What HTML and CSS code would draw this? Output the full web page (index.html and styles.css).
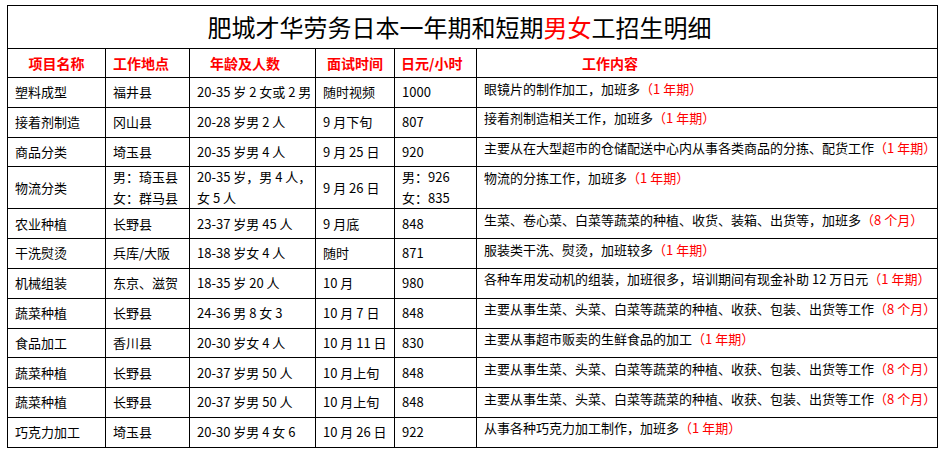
FILE: index.html
```html
<!DOCTYPE html>
<html lang="zh-CN">
<head>
<meta charset="utf-8">
<title>肥城才华劳务日本一年期和短期男女工招生明细</title>
<link rel="stylesheet" href="styles.css">
</head>
<body>
<div class="page">
<table class="sheet">
  <colgroup>
    <col class="c-name">
    <col class="c-place">
    <col class="c-age">
    <col class="c-date">
    <col class="c-pay">
    <col class="c-desc">
  </colgroup>
  <tr class="title-row">
    <th colspan="6" class="title">肥城才华劳务日本一年期和短期<span class="red">男女</span>工招生明细</th>
  </tr>
  <tr class="head-row">
    <th class="h-center">项目名称</th>
    <th class="h-place">工作地点</th>
    <th class="h-age">年龄及人数</th>
    <th class="h-center">面试时间</th>
    <th class="h-pay">日元/小时</th>
    <th class="h-desc">工作内容</th>
  </tr>
  <tr>
    <td>塑料成型</td><td>福井县</td><td>20-35 岁 2 女或 2 男</td><td>随时视频</td><td>1000</td>
    <td class="desc">眼镜片的制作加工，加班多<span class="red">（1 年期）</span></td>
  </tr>
  <tr>
    <td>接着剂制造</td><td>冈山县</td><td>20-28 岁男 2 人</td><td>9 月下旬</td><td>807</td>
    <td class="desc">接着剂制造相关工作，加班多<span class="red">（1 年期）</span></td>
  </tr>
  <tr>
    <td>商品分类</td><td>埼玉县</td><td>20-35 岁男 4 人</td><td>9 月 25 日</td><td>920</td>
    <td class="desc">主要从在大型超市的仓储配送中心内从事各类商品的分拣、配货工作<span class="red">（1 年期）</span></td>
  </tr>
  <tr class="tall-row">
    <td>物流分类</td><td>男：琦玉县<br>女：群马县</td><td>20-35 岁，男 4 人，<br>女 5 人</td><td>9 月 26 日</td><td>男：926<br>女：835</td>
    <td class="desc">物流的分拣工作，加班多<span class="red">（1 年期）</span></td>
  </tr>
  <tr>
    <td>农业种植</td><td>长野县</td><td>23-37 岁男 45 人</td><td>9 月底</td><td>848</td>
    <td class="desc">生菜、卷心菜、白菜等蔬菜的种植、收货、装箱、出货等，加班多<span class="red">（8 个月）</span></td>
  </tr>
  <tr>
    <td>干洗熨烫</td><td>兵库/大阪</td><td>18-38 岁女 4 人</td><td>随时</td><td>871</td>
    <td class="desc">服装类干洗、熨烫，加班较多<span class="red">（1 年期）</span></td>
  </tr>
  <tr>
    <td>机械组装</td><td>东京、滋贺</td><td>18-35 岁 20 人</td><td>10 月</td><td>980</td>
    <td class="desc">各种车用发动机的组装，加班很多，培训期间有现金补助 12 万日元<span class="red">（1 年期）</span></td>
  </tr>
  <tr>
    <td>蔬菜种植</td><td>长野县</td><td>24-36 男 8 女 3</td><td>10 月 7 日</td><td>848</td>
    <td class="desc">主要从事生菜、头菜、白菜等蔬菜的种植、收获、包装、出货等工作<span class="red">（8 个月）</span></td>
  </tr>
  <tr>
    <td>食品加工</td><td>香川县</td><td>20-30 岁女 4 人</td><td>10 月 11 日</td><td>830</td>
    <td class="desc">主要从事超市贩卖的生鲜食品的加工<span class="red">（1 年期）</span></td>
  </tr>
  <tr>
    <td>蔬菜种植</td><td>长野县</td><td>20-37 岁男 50 人</td><td>10 月上旬</td><td>848</td>
    <td class="desc">主要从事生菜、头菜、白菜等蔬菜的种植、收获、包装、出货等工作<span class="red">（8 个月）</span></td>
  </tr>
  <tr>
    <td>蔬菜种植</td><td>长野县</td><td>20-37 岁男 50 人</td><td>10 月上旬</td><td>848</td>
    <td class="desc">主要从事生菜、头菜、白菜等蔬菜的种植、收获、包装、出货等工作<span class="red">（8 个月）</span></td>
  </tr>
  <tr>
    <td>巧克力加工</td><td>埼玉县</td><td>20-30 岁男 4 女 6</td><td>10 月 26 日</td><td>922</td>
    <td class="desc">从事各种巧克力加工制作，加班多<span class="red">（1 年期）</span></td>
  </tr>
</table>
</div>
</body>
</html>
```

FILE: styles.css
```css
html, body {
  margin: 0;
  padding: 0;
  background: #ffffff;
}

body {
  font-family: "Noto Sans CJK SC", "Noto Sans", sans-serif;
  color: #000000;
}

.page {
  padding: 5px 0 0 7px;
}

.sheet {
  border-collapse: collapse;
  table-layout: fixed;
  width: 930px;
}

.c-name { width: 98px; }
.c-place { width: 84px; }
.c-age { width: 126px; }
.c-date { width: 79px; }
.c-pay { width: 82px; }
.c-desc { width: 461px; }

.sheet th,
.sheet td {
  border: 1px solid #000000;
  padding: 0 0 0 7px;
  white-space: nowrap;
  overflow: hidden;
  font-size: 13px;
  line-height: 20.5px;
  text-align: left;
  vertical-align: middle;
  font-weight: 400;
}

.sheet tr {
  height: 29.8px;
}

.sheet .title-row {
  height: 43px;
}

.sheet .title {
  font-size: 24px;
  line-height: 30px;
  text-align: center;
  padding: 0 26px 0 0;
}

.sheet .head-row {
  height: 29px;
}

.head-row th {
  color: #ff0000;
  font-weight: 700;
  font-size: 14px;
}

.head-row .h-center {
  text-align: center;
  padding-left: 0;
}

.head-row .h-place { padding-left: 7px; }
.head-row .h-age { padding-left: 20px; }
.head-row .h-pay { padding-left: 6px; }
.head-row .h-desc { padding-left: 105px; }

.sheet .tall-row {
  height: 42px;
}

.sheet td.desc {
  vertical-align: top;
  padding-top: 0.5px;
}

.red {
  color: #ff0000;
}
```
